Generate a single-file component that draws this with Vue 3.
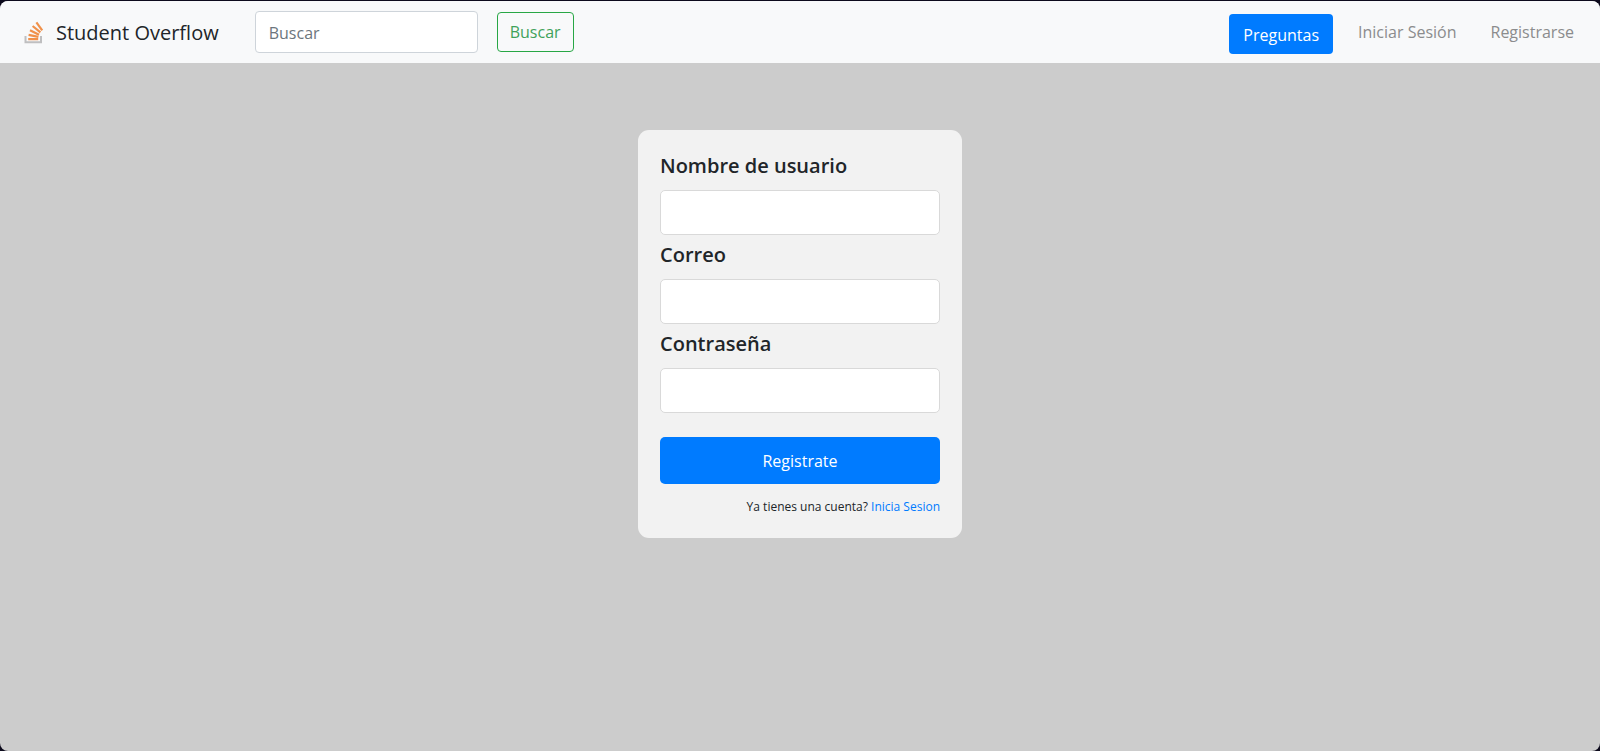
<script setup>
import { ref } from 'vue'

const search = ref('')
const fields = [
  { id: 'username', label: 'Nombre de usuario', type: 'text' },
  { id: 'email', label: 'Correo', type: 'email' },
  { id: 'password', label: 'Contraseña', type: 'password' },
]
</script>

<template>
  <div class="screen">
    <div class="page">
      <header class="navbar">
        <a class="brand" href="#">
          <svg class="logo" viewBox="0 0 20 24" aria-hidden="true">
            <path d="M1.5 15V21.2H17V15" fill="none" stroke="#bfbfc0" stroke-width="2" />
            <g stroke="#f0914a" stroke-width="2.2">
              <path d="M4.2 18.1H14.2" />
              <path d="M4.6 13.8L14.4 15.9" />
              <path d="M6 9.3L15 13.7" />
              <path d="M8.6 5L16.4 11.4" />
              <path d="M12.4 1.3L18.2 9.4" />
            </g>
          </svg>
          <span>Student Overflow</span>
        </a>
        <form class="search" @submit.prevent>
          <input v-model="search" class="search-input" type="search" placeholder="Buscar" aria-label="Buscar" />
          <button class="search-button" type="submit">Buscar</button>
        </form>
        <nav class="links">
          <a class="questions" href="#">Preguntas</a>
          <a class="link" href="#">Iniciar Sesión</a>
          <a class="link" href="#">Registrarse</a>
        </nav>
      </header>
      <main class="content">
        <form class="card" @submit.prevent>
          <div v-for="field in fields" :key="field.id" class="field">
            <label :for="field.id">{{ field.label }}</label>
            <input :id="field.id" :type="field.type" />
          </div>
          <button class="submit" type="submit">Registrate</button>
          <p class="login">Ya tienes una cuenta? <a href="#">Inicia Sesion</a></p>
        </form>
      </main>
    </div>
  </div>
</template>

<style>
body {
  margin: 0;
  background: #0c0a1c;
}
</style>

<style scoped>
* {
  box-sizing: border-box;
}

.screen {
  display: flex;
  min-height: 100vh;
  padding-top: 1px;
  font-family: "Segoe UI", "Open Sans", "Noto Sans", sans-serif;
  font-size: 16px;
  line-height: 24px;
  color: #212529;
}

input,
button {
  font: inherit;
}

a {
  text-decoration: none;
}

.page {
  display: flex;
  flex-direction: column;
  flex: 1;
  border-radius: 8px;
  overflow: hidden;
  background: #cccccc;
}

.navbar {
  display: flex;
  align-items: center;
  height: 62px;
  padding: 0 26px 0 24px;
  background: #f8f9fa;
}

.brand {
  display: flex;
  align-items: center;
  gap: 12px;
  margin-right: 36px;
  padding-top: 2px;
  font-size: 20px;
  line-height: 32px;
  color: #212529;
}

.logo {
  width: 20px;
  height: 24px;
}

.search {
  display: flex;
  align-items: center;
  gap: 19px;
}

.search-input {
  width: 223px;
  height: 42px;
  padding: 2px 13px 0;
  border: 1px solid #ced4da;
  border-radius: 4px;
  background: #ffffff;
  color: #495057;
}

.search-input::placeholder {
  color: #6c757d;
  opacity: 1;
}

.search-button {
  height: 40px;
  padding: 0 12px;
  border: 1px solid #28a745;
  border-radius: 4px;
  background: transparent;
  color: #3fa25a;
}

.links {
  display: flex;
  align-items: center;
  gap: 34px;
  margin-left: auto;
}

.questions {
  margin: 4px -9px 0 0;
  padding: 9px 14px 7px;
  border-radius: 4px;
  background: #007bff;
  color: #ffffff;
}

.link {
  color: #8b8c8d;
}

.content {
  display: flex;
  justify-content: center;
  padding-top: 67px;
}

.card {
  width: 324px;
  padding: 23px 22px 21px;
  border-radius: 11px;
  background: #f2f2f2;
}

.field {
  display: flex;
  flex-direction: column;
  gap: 11px;
  margin-bottom: 7px;
}

.field label {
  font-size: 20px;
  line-height: 26px;
  font-weight: 600;
}

.field input {
  height: 45px;
  padding: 0 13px;
  border: 1px solid #d9d9d9;
  border-radius: 5px;
  background: #ffffff;
}

.submit {
  width: 100%;
  height: 47px;
  margin-top: 17px;
  padding: 0;
  border: 0;
  border-radius: 5px;
  background: #007bff;
  color: #ffffff;
}

.login {
  margin: 13px 0 0;
  font-size: 12px;
  line-height: 20px;
  text-align: right;
}

.login a {
  color: #007bff;
}
</style>
